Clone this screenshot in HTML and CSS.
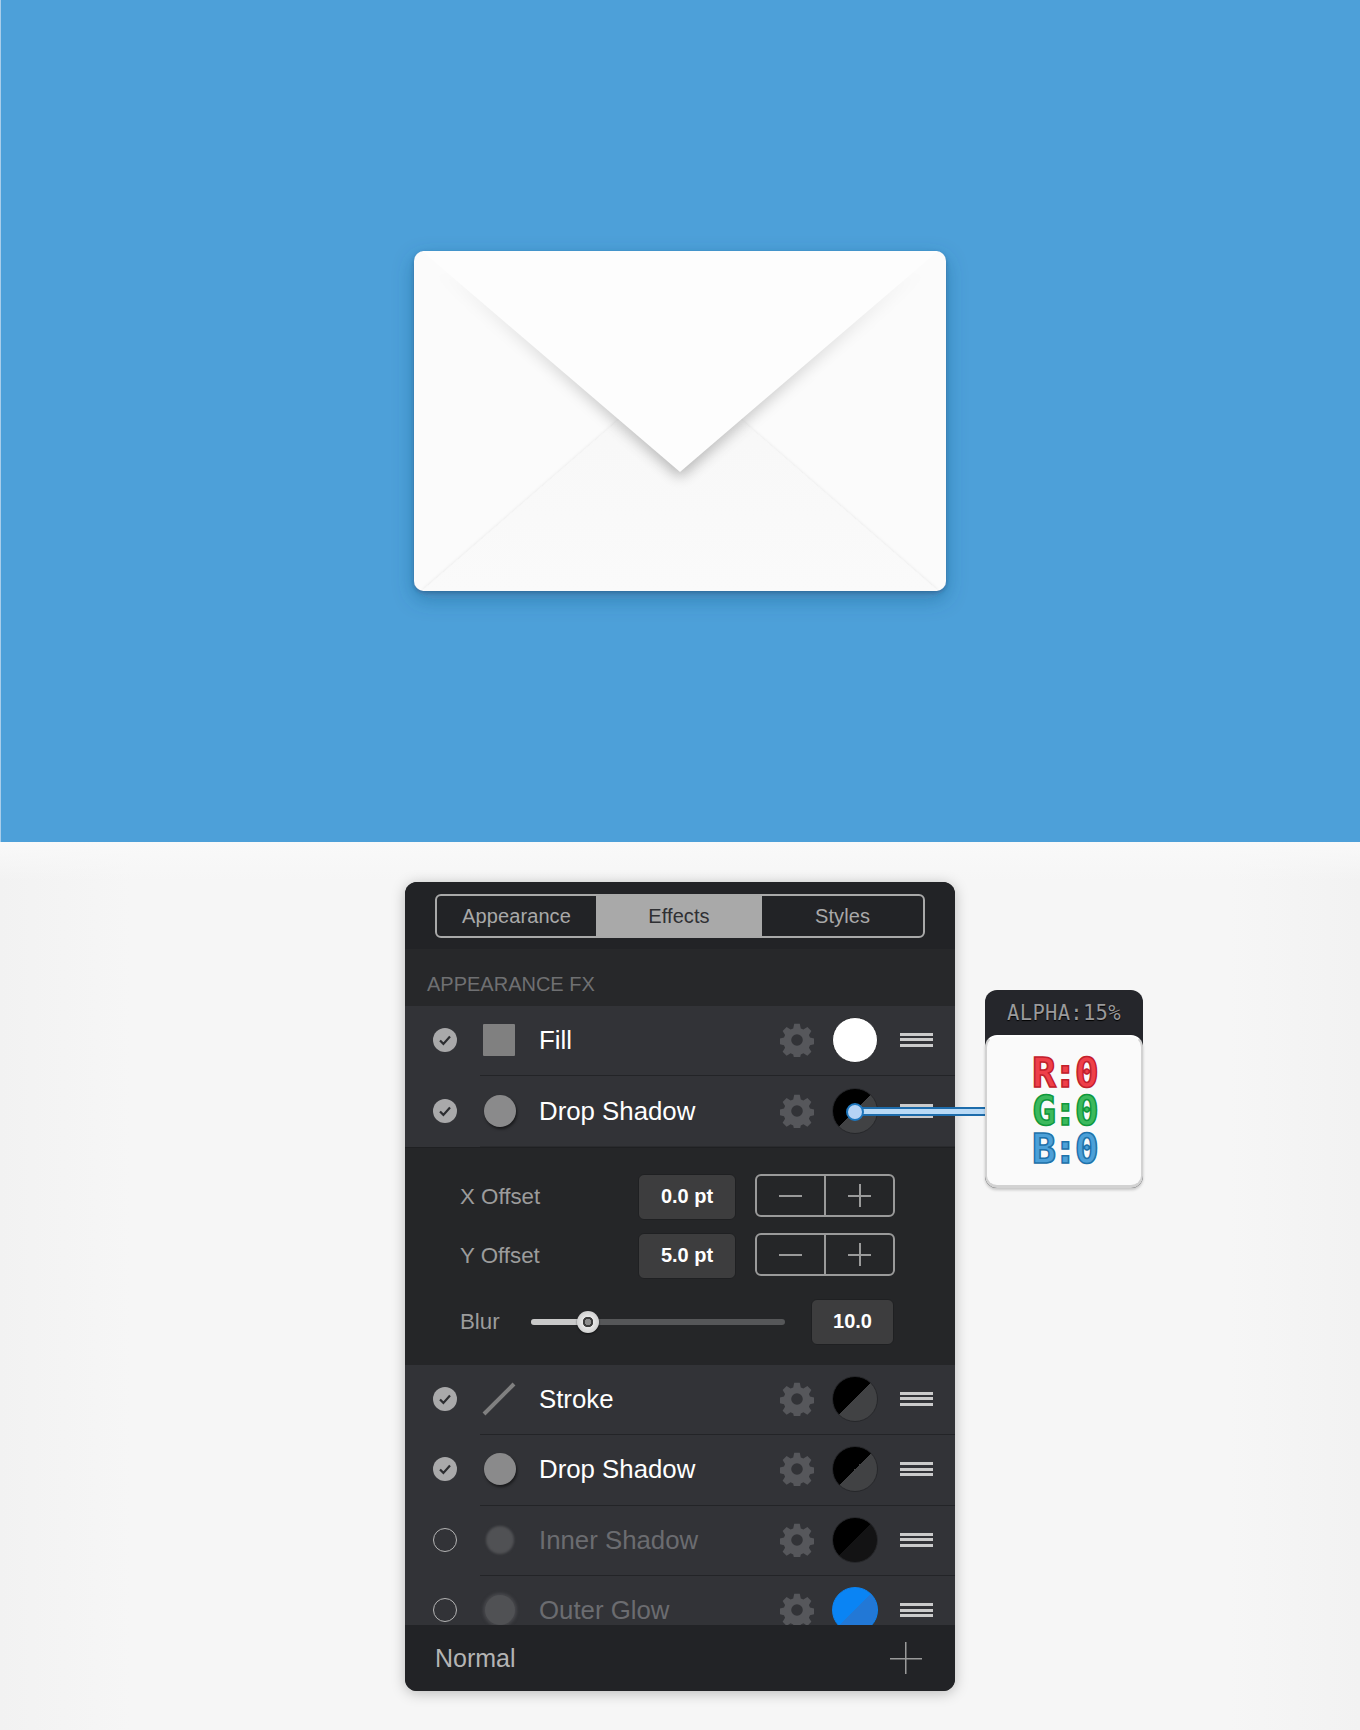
FILE: index.html
```html
<!DOCTYPE html>
<html lang="en">
<head>
<meta charset="utf-8">
<title>Envelope icon and effects panel</title>
<link rel="stylesheet" href="styles.css">
</head>
<body>
<svg class="defs" width="0" height="0" aria-hidden="true">
  <defs>
    <symbol id="gear" viewBox="0 0 34 34">
      <path fill-rule="evenodd" d="M14.2 0.8h5.6l1 4.6 2.6 1.1 4-2.5 4 4-2.5 4 1.1 2.6 4.6 1v5.6l-4.6 1-1.1 2.6 2.5 4-4 4-4-2.5-2.6 1.1-1 4.6h-5.6l-1-4.6-2.6-1.1-4 2.5-4-4 2.5-4-1.1-2.6-4.6-1v-5.6l4.6-1 1.1-2.6-2.5-4 4-4 4 2.5 2.6-1.1zM17 11.2a5.8 5.8 0 1 0 0 11.6 5.8 5.8 0 0 0 0-11.6z"/>
    </symbol>
    <symbol id="check" viewBox="0 0 24 24">
      <circle cx="12" cy="12" r="12" fill="#a9a9aa"/>
      <path d="M7 12.5l3.4 3.4L17 8.6" fill="none" stroke="#2c2d30" stroke-width="2.2"/>
    </symbol>
  </defs>
</svg>

<section class="hero">
  <svg class="envelope" width="600" height="420" viewBox="-34 -30 600 420">
    <defs>
      <filter id="envShadowSoft" x="-10%" y="-10%" width="120%" height="130%">
        <feDropShadow dx="0" dy="7" stdDeviation="10" flood-color="#1d4f7c" flood-opacity=".38"/>
      </filter>
      <filter id="envShadowHard" x="-5%" y="-5%" width="110%" height="110%">
        <feDropShadow dx="0" dy="2" stdDeviation="2" flood-color="#1d4f7c" flood-opacity=".5"/>
      </filter>
      <filter id="blur7" x="-15%" y="-15%" width="130%" height="130%">
        <feGaussianBlur stdDeviation="7"/>
      </filter>
      <filter id="foldShadow" x="-10%" y="-10%" width="120%" height="120%">
        <feDropShadow dx="0" dy="-1" stdDeviation="1.5" flood-color="#000" flood-opacity=".07"/>
      </filter>
      <linearGradient id="lowerFold" x1="0" y1="0" x2="0" y2="1">
        <stop offset="0" stop-color="#f7f7f7"/>
        <stop offset="1" stop-color="#fafafa"/>
      </linearGradient>
      <linearGradient id="shadowFade" gradientUnits="userSpaceOnUse" x1="0" y1="20" x2="0" y2="230">
        <stop offset="0" stop-color="#000"/>
        <stop offset=".35" stop-color="#555"/>
        <stop offset="1" stop-color="#fff"/>
      </linearGradient>
      <mask id="shadowMask" maskUnits="userSpaceOnUse" x="0" y="0" width="532" height="340">
        <rect width="532" height="340" fill="url(#shadowFade)"/>
      </mask>
      <clipPath id="envClip"><rect width="532" height="340" rx="10"/></clipPath>
    </defs>
    <g filter="url(#envShadowSoft)">
      <rect width="532" height="340" rx="10" fill="#fbfbfb" filter="url(#envShadowHard)"/>
    </g>
    <g clip-path="url(#envClip)">
      <path d="M8 340L266 116 524 340z" fill="url(#lowerFold)" filter="url(#foldShadow)"/>
      <g mask="url(#shadowMask)">
        <path d="M8 5H524L266 226z" fill="#000" opacity=".3" filter="url(#blur7)"/>
      </g>
      <path d="M8 0H524L266 221z" fill="#fdfdfd"/>
    </g>
  </svg>
</section>

<section class="stage">
  <div class="panel">
    <nav class="tabs-bar">
      <div class="tabs">
        <span class="tab tab-first">Appearance</span>
        <span class="tab tab-active">Effects</span>
        <span class="tab">Styles</span>
      </div>
    </nav>
    <h2 class="section-title">APPEARANCE FX</h2>

    <div class="row">
      <svg class="check"><use href="#check"/></svg>
      <span class="type-icon square"></span>
      <span class="row-name">Fill</span>
      <svg class="gear"><use href="#gear"/></svg>
      <span class="swatch swatch-white"></span>
      <span class="handle"></span>
    </div>
    <div class="row row-last">
      <svg class="check"><use href="#check"/></svg>
      <span class="type-icon circle"></span>
      <span class="row-name">Drop Shadow</span>
      <svg class="gear"><use href="#gear"/></svg>
      <span class="swatch swatch-split"></span>
      <span class="handle"></span>
    </div>

    <div class="details">
      <div class="detail-row">
        <span class="detail-label">X Offset</span>
        <span class="value value-pt">0.0 pt</span>
        <div class="stepper"><span class="step minus"></span><span class="step plus"></span></div>
      </div>
      <div class="detail-row">
        <span class="detail-label">Y Offset</span>
        <span class="value value-pt">5.0 pt</span>
        <div class="stepper"><span class="step minus"></span><span class="step plus"></span></div>
      </div>
      <div class="detail-row blur-row">
        <span class="blur-label">Blur</span>
        <div class="slider"><span class="slider-fill"></span><span class="slider-knob"></span></div>
        <span class="value value-blur">10.0</span>
      </div>
    </div>

    <div class="row">
      <svg class="check"><use href="#check"/></svg>
      <svg class="type-icon line" viewBox="0 0 34 34"><path d="M2 32L32 2" stroke="#808080" stroke-width="4"/></svg>
      <span class="row-name">Stroke</span>
      <svg class="gear"><use href="#gear"/></svg>
      <span class="swatch swatch-split"></span>
      <span class="handle"></span>
    </div>
    <div class="row">
      <svg class="check"><use href="#check"/></svg>
      <span class="type-icon circle"></span>
      <span class="row-name">Drop Shadow</span>
      <svg class="gear"><use href="#gear"/></svg>
      <span class="swatch swatch-split"></span>
      <span class="handle"></span>
    </div>
    <div class="row">
      <span class="unchecked"></span>
      <span class="type-icon inner"></span>
      <span class="row-name row-off">Inner Shadow</span>
      <svg class="gear"><use href="#gear"/></svg>
      <span class="swatch swatch-dark"></span>
      <span class="handle"></span>
    </div>
    <div class="clip-row">
      <div class="row">
        <span class="unchecked"></span>
        <span class="type-icon outer"></span>
        <span class="row-name row-off">Outer Glow</span>
        <svg class="gear"><use href="#gear"/></svg>
        <span class="swatch swatch-blue"></span>
        <span class="handle"></span>
      </div>
    </div>

    <footer class="panel-footer">
      <span class="blend">Normal</span>
      <span class="add"></span>
    </footer>

    <div class="connector"></div>
    <aside class="callout">
      <div class="callout-head">ALPHA:15%</div>
      <div class="callout-body">
        <span class="rgb rgb-r">R:0</span>
        <span class="rgb rgb-g">G:0</span>
        <span class="rgb rgb-b">B:0</span>
      </div>
    </aside>
  </div>
</section>
</body>
</html>
```
FILE: styles.css
```css
* { box-sizing: border-box; }
html, body { margin: 0; padding: 0; }
body {
  width: 1360px;
  height: 1730px;
  overflow: hidden;
  background: #f6f6f6;
  font-family: "Liberation Sans", Arial, sans-serif;
}
.defs { position: absolute; }

.hero {
  height: 842px;
  background: #4da0d9;
  box-shadow: inset 1px 0 0 #a8cdea;
  display: flex;
  justify-content: center;
  padding-top: 221px;
}
.envelope { display: block; }

.stage {
  height: 888px;
  padding: 40px 0 0 405px;
  background:
    linear-gradient(#f9f9f9, rgba(249, 249, 249, 0) 40px),
    linear-gradient(90deg, #f2f2f2 0, #f6f6f6 130px, #f6f6f6 1230px, #f2f2f2 1360px);
}
.panel {
  position: relative;
  width: 550px;
  height: 809px;
  background: #252628;
  border-radius: 12px;
  box-shadow: 0 2px 14px rgba(0, 0, 0, .25);
}

.tabs-bar {
  height: 67px;
  padding: 12px 30px 0;
  background: #222326;
  border-radius: 12px 12px 0 0;
}
.tabs {
  display: flex;
  width: 490px;
  height: 44px;
  border: 2px solid #a9a9a9;
  border-radius: 6px;
  overflow: hidden;
}
.tab {
  display: flex;
  align-items: center;
  justify-content: center;
  flex: 1 1 0;
  font-size: 20px;
  letter-spacing: .1px;
  color: #a9a9a9;
}
.tab-first { flex: 0 0 159px; }
.tab-active { flex: 0 0 166px; background: #a9a9a9; color: #2f3033; }

.section-title {
  margin: 0;
  height: 57px;
  padding: 23px 0 0 22px;
  font-size: 20px;
  line-height: 24px;
  font-weight: 400;
  color: #6f7072;
  background: #27282a;
}

.row {
  display: flex;
  align-items: center;
  height: 70.4px;
  padding: 0 0 2px 28px;
  background: #323337;
  position: relative;
}
.row::after {
  content: "";
  position: absolute;
  left: 75px;
  right: 0;
  bottom: 0;
  height: 1px;
  background: #232427;
}
.row-last::after { background: #2a2b2e; }
.check { width: 24px; height: 24px; flex: none; }
.unchecked {
  width: 24px;
  height: 24px;
  flex: none;
  border: 1.5px solid #b4b4b4;
  border-radius: 50%;
}
.type-icon { display: block; flex: none; width: 32px; height: 32px; margin-left: 27px; }
.square { background: #808080; border-radius: 1px; margin-left: 26px; }
.circle { background: #8a8a8b; border-radius: 50%; box-shadow: 1px 2px 3px rgba(0, 0, 0, .55); margin-right: -1px; }
.line { width: 34px; height: 34px; margin-left: 25px; margin-right: -1px; }
.inner { background: #505154; border-radius: 50%; width: 28px; height: 28px; margin-left: 29px; margin-right: 1px; filter: blur(1px); }
.outer { background: #505154; border-radius: 50%; width: 30px; height: 30px; margin-left: 28px; box-shadow: 0 0 3px 2px rgba(90, 90, 93, .5); }
.row-name {
  flex: none;
  width: 240px;
  margin-left: 24px;
  font-size: 25.8px;
  line-height: 30px;
  color: #fff;
  white-space: nowrap;
}
.row-off { color: #6b6c70; }
.gear { flex: none; width: 34px; height: 34px; margin-left: 1px; fill: #56575b; }
.swatch {
  flex: none;
  width: 46px;
  height: 46px;
  margin-left: 18px;
  border-radius: 50%;
  border: 1px solid #26272a;
}
.swatch-white { background: #fff; }
.swatch-split { background: linear-gradient(135deg, #000 0 50%, #414244 50% 100%); }
.swatch-dark { background: linear-gradient(135deg, #000 0 50%, #131314 50% 100%); }
.swatch-blue { background: linear-gradient(135deg, #0a84f4 0 50%, #2278d6 50% 100%); border-color: #0a84f4; }
.handle {
  flex: none;
  width: 33px;
  height: 14px;
  margin-left: 22px;
  background: linear-gradient(#cbcbcb 0 3px, transparent 3px 5.5px, #cbcbcb 5.5px 8.5px, transparent 8.5px 11px, #cbcbcb 11px 14px);
}
.clip-row { height: 49px; overflow: hidden; }

.details {
  height: 218px;
  padding: 27px 30px 0 55px;
  background: #252628;
  box-shadow: inset 0 1px 0 #1f2022;
}
.detail-row { display: flex; align-items: center; height: 46px; margin-bottom: 13px; }
.detail-label {
  width: 178px;
  font-size: 22.3px;
  color: #9c9c9c;
}
.value {
  display: flex;
  align-items: center;
  justify-content: center;
  height: 46px;
  background: #3d3d3e;
  border: 1px solid #1f2022;
  border-radius: 6px;
  font-size: 20px;
  font-weight: 700;
  color: #fff;
}
.value-pt { width: 98px; }
.stepper {
  display: flex;
  width: 140px;
  height: 43px;
  margin: -3px 0 0 19px;
  border: 2px solid #9a9a9a;
  border-radius: 6px;
}
.step { position: relative; flex: 1 1 0; }
.minus { border-right: 2px solid #9a9a9a; }
.minus::before, .plus::before, .plus::after {
  content: "";
  position: absolute;
  background: #9a9a9a;
}
.minus::before { left: 22px; right: 22px; top: 19px; height: 2px; }
.plus::before { left: 22px; right: 22px; top: 19px; height: 2px; }
.plus::after { left: 50%; margin-left: -1px; top: 8px; bottom: 8px; width: 2px; }

.blur-row { margin: 20px 0 0; height: 46px; }
.blur-label { width: 71px; font-size: 22.3px; color: #9c9c9c; }
.slider {
  position: relative;
  width: 254px;
  height: 6px;
  background: #565759;
  border-radius: 3px;
}
.slider-fill {
  position: absolute;
  left: 0;
  top: 0;
  bottom: 0;
  width: 57px;
  background: #c9c9c9;
  border-radius: 3px 0 0 3px;
}
.slider-knob {
  position: absolute;
  left: 46px;
  top: -8px;
  width: 22px;
  height: 22px;
  border-radius: 50%;
  background: radial-gradient(circle, #8b8b8b 0 3px, #3c3c3c 3px 5px, #e6e6e6 5.5px, #bdbdbd 100%);
  box-shadow: 0 1px 2px rgba(0, 0, 0, .6);
}
.value-blur { width: 83px; margin-left: 26px; }

.panel-footer {
  display: flex;
  align-items: center;
  justify-content: space-between;
  height: 66px;
  padding: 1px 33px 0 30px;
  background: #222326;
  border-radius: 0 0 12px 12px;
}
.blend { font-size: 25px; color: #b4b4b4; }
.add {
  width: 32px;
  height: 32px;
  background:
    linear-gradient(#9a9a9a, #9a9a9a) center / 32px 1.5px no-repeat,
    linear-gradient(#9a9a9a, #9a9a9a) center / 1.5px 32px no-repeat;
}

.connector {
  position: absolute;
  left: 449px;
  top: 225px;
  width: 133px;
  height: 9px;
  background: #b9daf6;
  border-top: 2px solid #1d6cab;
  border-bottom: 2px solid #1d6cab;
}
.connector::before {
  content: "";
  position: absolute;
  left: -8px;
  top: -6px;
  width: 14px;
  height: 14px;
  border-radius: 50%;
  background: #b5d3f5;
  border: 2px solid #1d76bd;
}
.callout {
  position: absolute;
  left: 580px;
  top: 108px;
  width: 158px;
  height: 198px;
  background: #25262b;
  border-radius: 12px;
}
.callout-head {
  height: 45px;
  text-align: center;
  padding-top: 10px;
  font-family: "DejaVu Sans Mono", monospace;
  font-size: 20.5px;
  line-height: 26px;
  letter-spacing: .3px;
  color: #9a9a9c;
  text-shadow: 0 1px 1px #000;
}
.callout-body {
  display: flex;
  flex-direction: column;
  align-items: center;
  height: 153px;
  padding-top: 17px;
  background: #fafafa;
  border: 2px solid #d2d2d2;
  border-top-color: #fff;
  border-bottom-width: 3px;
  border-radius: 12px;
  box-shadow: 0 2px 3px rgba(0, 0, 0, .2);
}
.rgb {
  font-family: "DejaVu Sans Mono", monospace;
  font-weight: 700;
  font-size: 40px;
  line-height: 38px;
  letter-spacing: -2.8px;
  text-shadow: 0 1px 0 rgba(0, 0, 0, .12);
}
.rgb-r { color: #ef3f49; -webkit-text-stroke: 1.5px #c2202c; }
.rgb-g { color: #3cb95c; -webkit-text-stroke: 1.5px #0f983c; }
.rgb-b { color: #4ca0d8; -webkit-text-stroke: 1.5px #1e72ab; }
```
